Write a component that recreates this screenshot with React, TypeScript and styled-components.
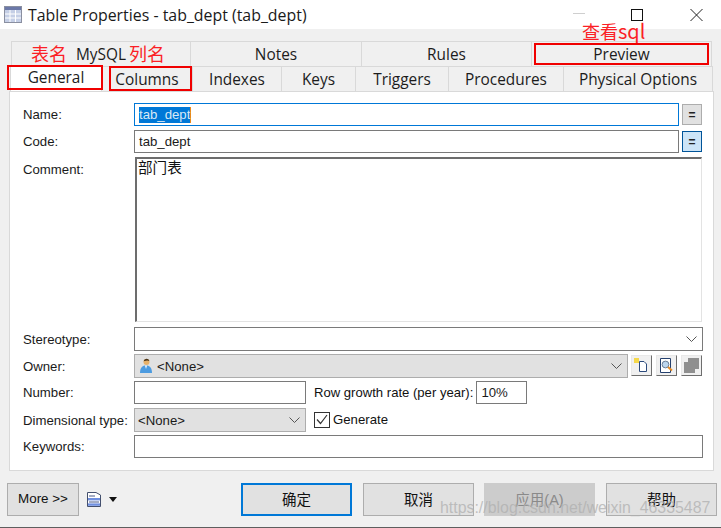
import React from 'react';
import styled, { createGlobalStyle } from 'styled-components';

const Global = createGlobalStyle`
  html, body {
    margin: 0;
    padding: 0;
    background: #f0f0f0;
  }
`;

const UI_FONT = `'Open Sans', 'Noto Sans', 'Noto Sans CJK SC', sans-serif`;
const FORM_FONT = `'Liberation Sans', 'Noto Sans CJK SC', sans-serif`;

const Window = styled.div`
  position: relative;
  width: 721px;
  height: 528px;
  overflow: hidden;
  display: flex;
  flex-direction: column;
  background: #f0f0f0;
  border-bottom: 1px solid #5e5e5e;
  box-sizing: border-box;
  font-family: ${FORM_FONT};
  color: #111;
`;

const TitleBar = styled.div`
  height: 29px;
  flex: none;
  background: #fff;
  display: flex;
  align-items: center;
  padding-left: 4px;
  gap: 6px;
  font-family: ${UI_FONT};
  font-size: 15.9px;
  color: #1a1a1a;
`;

const Tabs = styled.div`
  margin: 12px 9px 0 11px;
  flex: none;
  display: flex;
  flex-direction: column;
`;

const TabRow = styled.div<{ $front?: boolean }>`
  display: flex;
  height: 25px;
  margin-left: ${({ $front }) => ($front ? '-1px' : '0')};
`;

const Tab = styled.div<{ $w: number; $active?: boolean }>`
  width: ${({ $w }) => $w}px;
  flex: none;
  box-sizing: border-box;
  display: flex;
  align-items: center;
  justify-content: center;
  font-family: ${UI_FONT};
  font-size: 15.4px;
  color: #1c1c1c;
  background: ${({ $active }) => ($active ? '#fff' : '#f0f0f0')};
  border: 1px solid #d9d9d9;
  border-left-width: ${({ $active }) => ($active ? '1px' : '0')};
  border-bottom: 0;
  padding-bottom: ${({ $active }) => ($active ? '3px' : '0')};
  &:first-child {
    border-left-width: 1px;
  }
`;

const Panel = styled.div`
  margin: 0 7px 0 9px;
  height: 380px;
  flex: none;
  box-sizing: border-box;
  background: #fff;
  border: 1px solid #d9d9d9;
  padding: 11px 10px 0 13px;
  display: flex;
  flex-direction: column;
`;

const Row = styled.div<{ $h: number; $gap: number }>`
  height: ${({ $h }) => $h}px;
  margin-bottom: ${({ $gap }) => $gap}px;
  display: flex;
  align-items: center;
  flex: none;
`;

const Label = styled.div<{ $top?: boolean }>`
  width: 111px;
  flex: none;
  font-size: 13.2px;
  color: #1a1a1a;
  white-space: nowrap;
  align-self: ${({ $top }) => ($top ? 'flex-start' : 'center')};
  padding-top: ${({ $top }) => ($top ? '5px' : '0')};
`;

const Field = styled.div<{ $w?: number; $focus?: boolean; $grey?: boolean; $pad?: number }>`
  ${({ $w }) => ($w ? `width: ${$w}px; flex: none;` : 'flex: 1;')}
  height: 100%;
  box-sizing: border-box;
  border: 1px solid ${({ $focus, $grey }) => ($focus ? '#0078d7' : $grey ? '#adadad' : '#7a7a7a')};
  background: ${({ $grey }) => ($grey ? '#e1e1e1' : '#fff')};
  display: flex;
  align-items: center;
  padding: 0 4px 0 ${({ $pad }) => $pad ?? 4}px;
  font-size: 13.2px;
  color: #1a1a1a;
  min-width: 0;
`;

const Selected = styled.span`
  background: #0078d7;
  color: #d8e8f6;
  line-height: 16px;
  border-right: 1px solid #e8891c;
`;

const OwnerName = styled.span`
  margin-left: 4px;
`;

const Chevron = styled.svg`
  margin-left: auto;
  margin-right: 1px;
  flex: none;
`;

const Arrow = () => (
  <Chevron width="11" height="6" viewBox="0 0 11 6">
    <path d="M0.5 0.5 L5.5 5.5 L10.5 0.5" fill="none" stroke="#555" strokeWidth="1" />
  </Chevron>
);

const EqButton = styled.div<{ $on?: boolean }>`
  width: 20px;
  height: 21px;
  margin-left: 3px;
  margin-right: 1px;
  flex: none;
  box-sizing: border-box;
  display: flex;
  align-items: center;
  justify-content: center;
  font-size: 12px;
  font-weight: 700;
  color: #222;
  background: ${({ $on }) => ($on ? '#cce4f7' : '#e1e1e1')};
  border: 1px solid ${({ $on }) => ($on ? '#005499' : '#adadad')};
`;

const CommentBox = styled.div`
  flex: 1;
  height: 100%;
  margin: 0 1px;
  box-sizing: border-box;
  background: #fff;
  border-top: 2px solid #6d6d6d;
  border-left: 2px solid #6d6d6d;
  border-right: 1px solid #e3e3e3;
  border-bottom: 1px solid #e3e3e3;
  padding: 0 1px;
  font-size: 14.6px;
  line-height: 15px;
  font-family: 'Noto Sans CJK SC', sans-serif;
`;

const ToolButton = styled.div<{ $first?: boolean }>`
  width: 21px;
  height: 21px;
  margin-left: ${({ $first }) => ($first ? 3 : 4)}px;
  flex: none;
  box-sizing: border-box;
  background: #f0f0f0;
  border: 1px solid;
  border-color: #e8e8e8 #6e6e6e #6e6e6e #e8e8e8;
  display: flex;
  align-items: center;
  justify-content: center;
  align-self: flex-start;
  margin-top: 1px;
`;

const InlineText = styled.span`
  margin: 0 3px 0 8px;
  font-size: 13.1px;
  white-space: nowrap;
`;

const CheckWrap = styled.label`
  display: flex;
  align-items: center;
  gap: 3px;
  margin-left: 8px;
  font-size: 13.2px;
  margin-bottom: 1px;
`;

const CheckBox = styled.span`
  width: 16px;
  height: 16px;
  box-sizing: border-box;
  border: 1px solid #333;
  background: #fff;
  display: flex;
  align-items: center;
  justify-content: center;
`;

const Footer = styled.div`
  margin-top: 12px;
  padding: 0 4px 0 7px;
  height: 33px;
  display: flex;
  align-items: stretch;
`;

const Button = styled.div<{ $w?: number; $primary?: boolean; $off?: boolean; $gap?: number }>`
  width: ${({ $w }) => $w ?? 112}px;
  margin-left: ${({ $gap }) => $gap ?? 0}px;
  flex: none;
  box-sizing: border-box;
  display: flex;
  align-items: center;
  justify-content: center;
  padding-bottom: 2px;
  font-size: 14.5px;
  font-family: ${FORM_FONT};
  color: ${({ $off }) => ($off ? '#8a8a8a' : '#111')};
  background: ${({ $off }) => ($off ? '#cccccc' : '#e1e1e1')};
  border: ${({ $primary }) => ($primary ? '2px solid #0078d7' : '1px solid #adadad')};
  ${({ $off }) => ($off ? 'border-color: #cccccc;' : '')}
`;

const MoreText = styled.span`
  font-size: 13.4px;
`;

const Extra = styled.div`
  width: 162px;
  flex: none;
  display: flex;
  align-items: center;
  gap: 8px;
  padding-left: 8px;
  box-sizing: border-box;
`;

const RedBox = styled.div<{ $x: number; $y: number; $w: number; $h: number }>`
  position: absolute;
  left: ${({ $x }) => $x}px;
  top: ${({ $y }) => $y}px;
  width: ${({ $w }) => $w}px;
  height: ${({ $h }) => $h}px;
  box-sizing: border-box;
  border: 2px solid #f00000;
`;

const RedNote = styled.div<{ $x: number; $y: number }>`
  position: absolute;
  left: ${({ $x }) => $x}px;
  top: ${({ $y }) => $y}px;
  color: #fb1f26;
  font-size: 18px;
  line-height: 20px;
  font-family: 'Noto Sans CJK SC', sans-serif;
  white-space: nowrap;
`;

const RedLatin = styled.span`
  font-size: 20px;
`;

const WindowControl = styled.svg<{ $x: number }>`
  position: absolute;
  left: ${({ $x }) => $x}px;
  top: 6px;
`;

const Watermark = styled.div`
  position: absolute;
  left: 440px;
  top: 497px;
  font-family: ${FORM_FONT};
  font-size: 15.9px;
  line-height: 22px;
  color: rgba(175, 175, 175, 0.75);
  white-space: nowrap;
`;

const TableIcon = () => (
  <svg width="18" height="18" viewBox="0 0 18 18">
    <rect x="0.5" y="0.5" width="17" height="16" fill="#c5cfe6" stroke="#8a8fa0" />
    <rect x="1" y="1" width="16" height="3" fill="#6b78a8" />
    <path d="M1 8h16M1 12h16M6 4v12M11.5 4v12" stroke="#fff" strokeWidth="1" />
  </svg>
);

const UserIcon = () => (
  <svg width="14" height="16" viewBox="0 0 14 16">
    <circle cx="7.5" cy="4" r="3" fill="#e8b26a" />
    <path d="M4.6 3.2 A3 3 0 0 1 10.4 3 L8 2.6z" fill="#4a3418" />
    <path d="M1 15 C1 9 4 7.5 7 7.5 C10 7.5 13 9 13 15z" fill="#4c9be0" />
    <path d="M6 7.6 L7 11 L8 7.6z" fill="#fff" />
  </svg>
);

const NewIcon = () => (
  <svg width="15" height="15" viewBox="0 0 15 15">
    <rect x="0" y="0" width="5" height="5" fill="#f5d84a" />
    <path d="M5.5 3.5 H10 L12.5 6 V13.5 H5.5z" fill="#fff" stroke="#2c4a7c" />
  </svg>
);

const SearchIcon = () => (
  <svg width="15" height="16" viewBox="0 0 15 16">
    <path d="M1.5 0.5 H11.5 V14.5 H1.5z" fill="#fff" stroke="#24406e" />
    <circle cx="6.5" cy="6.5" r="3.4" fill="#bcd6ee" stroke="#6d7f96" />
    <path d="M9 9 L13 12.5" stroke="#e58a24" strokeWidth="2" />
  </svg>
);

const StackIcon = () => (
  <svg width="15" height="15" viewBox="0 0 15 15">
    <path d="M0 4 H4 V0 H15 V11 H11 V15 H0z" fill="#8f8f8f" />
  </svg>
);

const ListIcon = () => (
  <svg width="14" height="15" viewBox="0 0 14 15">
    <path d="M0.5 0.5 H9 L13.5 3 V14.5 H0.5z" fill="#fff" stroke="#44506e" />
    <path d="M2 4h6M2 10h10" stroke="#4a5a8a" />
    <rect x="1" y="6" width="12" height="2.4" fill="#6f8fe0" />
    <rect x="1" y="11.4" width="12" height="2.4" fill="#6f8fe0" />
  </svg>
);

const TopTabs = [
  { label: 'MySQL', w: 180 },
  { label: 'Notes', w: 171 },
  { label: 'Rules', w: 170 },
  { label: 'Preview', w: 180 },
];

const BottomTabs = [
  { label: 'General', w: 92, active: true },
  { label: 'Columns', w: 91 },
  { label: 'Indexes', w: 89 },
  { label: 'Keys', w: 74 },
  { label: 'Triggers', w: 93 },
  { label: 'Procedures', w: 115 },
  { label: 'Physical Options', w: 149 },
];

export default function App() {
  return (
    <Window>
      <Global />
      <TitleBar>
        <TableIcon />
        Table Properties - tab_dept (tab_dept)
      </TitleBar>
      <Tabs>
        <TabRow>
          {TopTabs.map((t) => (
            <Tab key={t.label} $w={t.w}>
              {t.label}
            </Tab>
          ))}
        </TabRow>
        <TabRow $front>
          {BottomTabs.map((t) => (
            <Tab key={t.label} $w={t.w} $active={t.active}>
              {t.label}
            </Tab>
          ))}
        </TabRow>
      </Tabs>
      <Panel>
        <Row $h={23} $gap={4}>
          <Label>Name:</Label>
          <Field $focus>
            <Selected>tab_dept</Selected>
          </Field>
          <EqButton>=</EqButton>
        </Row>
        <Row $h={23} $gap={4}>
          <Label>Code:</Label>
          <Field>tab_dept</Field>
          <EqButton $on>=</EqButton>
        </Row>
        <Row $h={165} $gap={5}>
          <Label $top>Comment:</Label>
          <CommentBox>部门表</CommentBox>
        </Row>
        <Row $h={24} $gap={3}>
          <Label>Stereotype:</Label>
          <Field>
            <Arrow />
          </Field>
        </Row>
        <Row $h={24} $gap={3}>
          <Label>Owner:</Label>
          <Field $w={494} $grey>
            <UserIcon />
            <OwnerName>&lt;None&gt;</OwnerName>
            <Arrow />
          </Field>
          <ToolButton $first>
            <NewIcon />
          </ToolButton>
          <ToolButton>
            <SearchIcon />
          </ToolButton>
          <ToolButton>
            <StackIcon />
          </ToolButton>
        </Row>
        <Row $h={23} $gap={4}>
          <Label>Number:</Label>
          <Field $w={172} />
          <InlineText>Row growth rate (per year):</InlineText>
          <Field $w={51}>10%</Field>
        </Row>
        <Row $h={24} $gap={3}>
          <Label>Dimensional type:</Label>
          <Field $w={172} $grey $pad={3}>
            &lt;None&gt;
            <Arrow />
          </Field>
          <CheckWrap>
            <CheckBox>
              <svg width="12" height="11" viewBox="0 0 12 11">
                <path d="M1 5.5 L4.5 9.5 L11 1" fill="none" stroke="#333" strokeWidth="1.2" />
              </svg>
            </CheckBox>
            Generate
          </CheckWrap>
        </Row>
        <Row $h={23} $gap={0}>
          <Label>Keywords:</Label>
          <Field />
        </Row>
      </Panel>
      <Footer>
        <Button $w={72}>
          <MoreText>More &gt;&gt;</MoreText>
        </Button>
        <Extra>
          <ListIcon />
          <svg width="8" height="5" viewBox="0 0 8 5">
            <path d="M0 0 H8 L4 5z" fill="#111" />
          </svg>
        </Extra>
        <Button $w={111} $primary>确定</Button>
        <Button $w={111} $gap={11}>取消</Button>
        <Button $w={111} $gap={10} $off>应用(A)</Button>
        <Button $w={111} $gap={11}>帮助</Button>
      </Footer>

      <WindowControl $x={572} width="14" height="14" viewBox="0 0 14 14">
        <path d="M1 7.5 H13" stroke="#cfcfcf" />
      </WindowControl>
      <WindowControl $x={630} width="14" height="16" viewBox="0 0 14 16">
        <rect x="1.5" y="3.5" width="11" height="11" fill="none" stroke="#111" />
      </WindowControl>
      <WindowControl $x={689} width="16" height="16" viewBox="0 0 16 16">
        <path d="M1.5 3 L13.5 15 M13.5 3 L1.5 15" stroke="#222" />
      </WindowControl>

      <RedNote $x={31} $y={43}>表名</RedNote>
      <RedNote $x={129} $y={43}>列名</RedNote>
      <RedNote $x={582} $y={21}>
        查看<RedLatin>sql</RedLatin>
      </RedNote>
      <RedBox $x={7} $y={65} $w={96} $h={25} />
      <RedBox $x={109} $y={66} $w={83} $h={25} />
      <RedBox $x={534} $y={43} $w={175} $h={22} />
      <Watermark>https://blog.csdn.net/weixin_46335487</Watermark>
    </Window>
  );
}
